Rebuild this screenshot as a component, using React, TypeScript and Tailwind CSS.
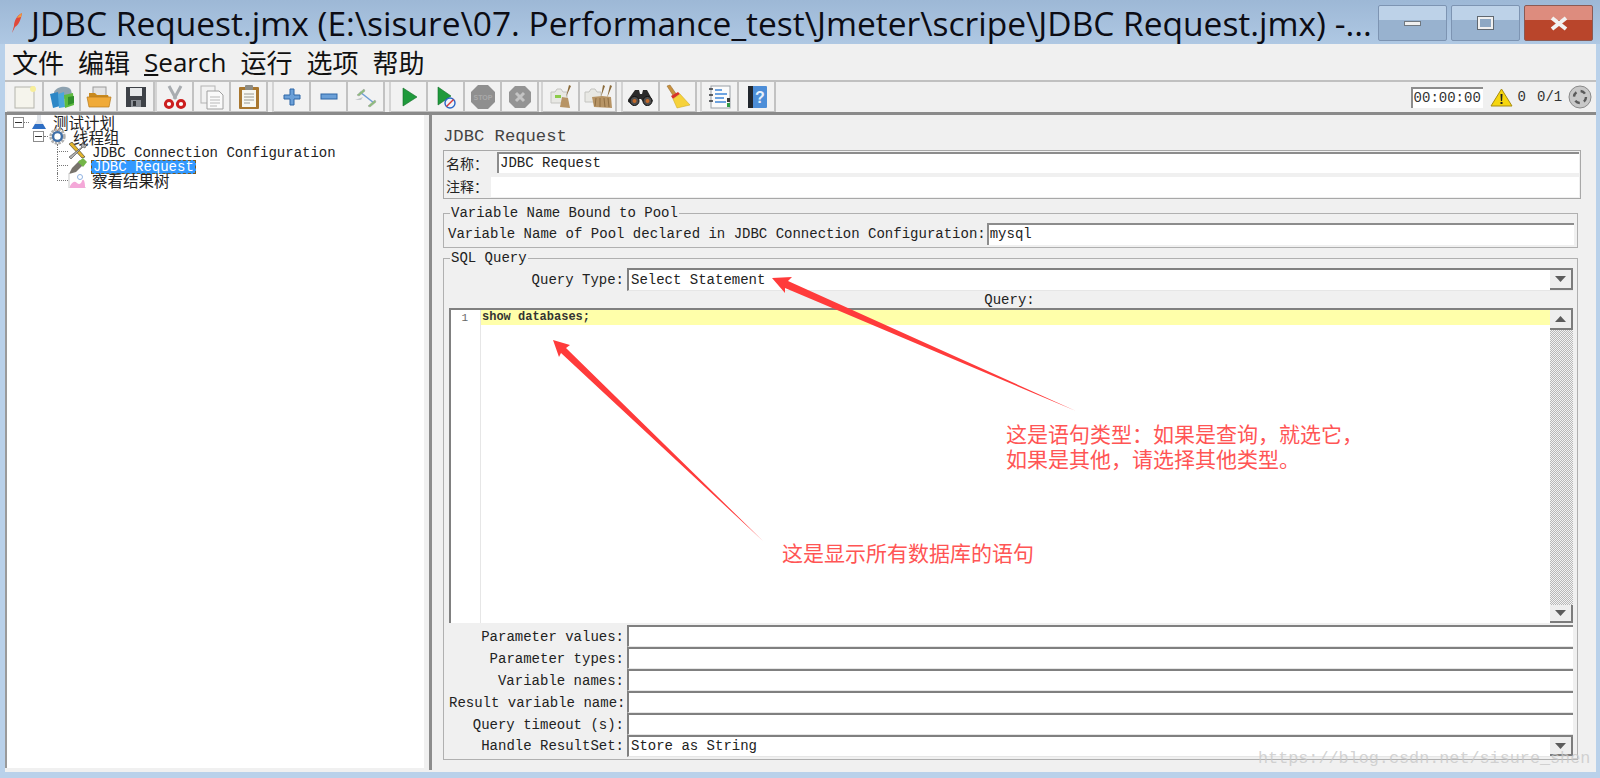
import React from 'react';

const mono = "font-['Liberation_Mono','Noto_Sans_CJK_SC',monospace]";
const cjk = "font-['Noto_Sans_CJK_SC',sans-serif]";

// --- toolbar icons, 24x24 ---
const NewIcon = () => (
    <svg width="26" height="26" viewBox="0 0 26 26">
        <rect x="3" y="3" width="19" height="21" fill="#f5f4ec" stroke="#b4b4ac" />
        <circle cx="21" cy="5" r="3" fill="#f7ee9a" />
    </svg>
);
const TemplatesIcon = () => (
    <svg width="28" height="26" viewBox="0 0 28 26">
        <path d="M6 8c3-6 14-7 17-2l2 8-19 2z" fill="#8ea2b0" />
        <path d="M2 10l8-2 2 14-7 2z" fill="#2c87c6" />
        <path d="M10 10l6-2 1 15-6 1z" fill="#4aa6dc" />
        <path d="M16 11l9-2 1 12-9 3z" fill="#5dbb3f" />
        <path d="M20 13l6-1v7l-6 2z" fill="#2f8f2c" />
    </svg>
);
const OpenIcon = () => (
    <svg width="26" height="26" viewBox="0 0 26 26">
        <rect x="7" y="3" width="13" height="10" fill="#e4e4e4" stroke="#9a9a9a" />
        <path d="M3 9h6l2 2h11l1 3H3z" fill="#c98a1e" />
        <path d="M1 13h24l-2 10H3z" fill="#f0aa38" stroke="#b57a1c" strokeWidth=".7" />
    </svg>
);
const SaveIcon = () => (
    <svg width="24" height="24" viewBox="0 0 24 24">
        <path d="M2 2h20v20H2z" fill="#3e4248" />
        <rect x="6" y="3" width="12" height="8" fill="#e6e8ea" />
        <rect x="7" y="15" width="10" height="7" fill="#8a8e94" />
        <rect x="9" y="16" width="3" height="5" fill="#33363a" />
    </svg>
);
const CutIcon = () => (
    <svg width="26" height="26" viewBox="0 0 26 26">
        <path d="M7 2l7 13M19 2l-7 13" stroke="#a8acb0" strokeWidth="3" fill="none" />
        <circle cx="7" cy="20" r="3.6" fill="#fff" stroke="#cc1f1f" strokeWidth="3" />
        <circle cx="19" cy="20" r="3.6" fill="#fff" stroke="#cc1f1f" strokeWidth="3" />
    </svg>
);
const CopyIcon = () => (
    <svg width="26" height="26" viewBox="0 0 26 26">
        <rect x="2" y="2" width="14" height="17" fill="#f2f2f2" stroke="#b4b4b4" />
        <path d="M8 7h12l4 4v14H8z" fill="#fafafa" stroke="#a0a0a0" />
        <path d="M11 13h10M11 16h10M11 19h10M11 22h7" stroke="#b8b8b8" />
    </svg>
);
const PasteIcon = () => (
    <svg width="26" height="26" viewBox="0 0 26 26">
        <rect x="3" y="3" width="20" height="22" rx="1" fill="#a9772f" />
        <rect x="6" y="6" width="14" height="17" fill="#f7f7f2" />
        <rect x="9" y="1" width="8" height="5" rx="1" fill="#8c8c86" />
        <path d="M8 10h10M8 13h10M8 16h10M8 19h6" stroke="#9a9a92" />
    </svg>
);
const PlusIcon = () => (
    <svg width="20" height="20" viewBox="0 0 20 20">
        <path d="M8 2h4v6h6v4h-6v6H8v-6H2V8h6z" fill="#6ba0d8" stroke="#2f66a6" />
    </svg>
);
const MinusIcon = () => (
    <svg width="20" height="20" viewBox="0 0 20 20">
        <rect x="2" y="7" width="16" height="5" fill="#6ba0d8" stroke="#2f66a6" />
    </svg>
);
const ToggleIcon = () => (
    <svg width="26" height="26" viewBox="0 0 26 26">
        <path d="M7 8l14 11" stroke="#6d9dd6" strokeWidth="1.5" />
        <path d="M4 11l7-6 1 2-6 5z" fill="#8cc07a" stroke="#999" strokeWidth=".5" />
        <path d="M15 22l7-6 1 2-6 5z" fill="#8cc07a" stroke="#999" strokeWidth=".5" />
        <path d="M2 16l8-3-2 3z" fill="#c4c8cc" />
    </svg>
);
const PlayIcon = () => (
    <svg width="24" height="24" viewBox="0 0 24 24">
        <path d="M6 3l14 9-14 9z" fill="#1f9a3c" stroke="#116d26" strokeWidth=".6" />
    </svg>
);
const PlayNoTimerIcon = () => (
    <svg width="24" height="26" viewBox="0 0 24 26">
        <path d="M4 3l13 9-13 9z" fill="#1f9a3c" stroke="#116d26" strokeWidth=".6" />
        <circle cx="16" cy="19" r="5" fill="#eef3fa" stroke="#2a66c8" strokeWidth="1.4" />
        <path d="M12.5 22.5l7-7" stroke="#d83a3a" strokeWidth="1.4" />
    </svg>
);
const StopIcon = () => (
    <svg width="26" height="26" viewBox="0 0 26 26">
        <path d="M8 1h10l7 7v10l-7 7H8l-7-7V8z" fill="#8f8f8f" />
        <text x="13" y="16" textAnchor="middle" fontSize="7" fontWeight="700" fontFamily="Liberation Sans" fill="#a9a9a9">STOP</text>
    </svg>
);
const ShutdownIcon = () => (
    <svg width="26" height="26" viewBox="0 0 26 26">
        <path d="M8 2h10l6 6v10l-6 6H8l-6-6V8z" fill="#949494" />
        <path d="M9 9l8 8M17 9l-8 8" stroke="#c4c4c4" strokeWidth="3" />
    </svg>
);
const ClearIcon = () => (
    <svg width="26" height="26" viewBox="0 0 26 26">
        <path d="M3 8h4l2-3h4l2 3h4v11H3z" fill="#e8e8e4" stroke="#c4c4c0" />
        <rect x="7" y="11" width="6" height="3" fill="#8ccc4a" />
        <path d="M21 1l2 1-5 11z" fill="#8a6a3a" />
        <path d="M14 13l6 1 2 10-10-1z" fill="#b79465" />
    </svg>
);
const ClearAllIcon = () => (
    <svg width="30" height="26" viewBox="0 0 30 26">
        <path d="M2 8h4l2-3h4l2 3h4v10H2z" fill="#e8e8e4" stroke="#c4c4c0" />
        <path d="M20 1l2 1-4 11zM27 1l2 1-5 12z" fill="#8a6a3a" />
        <path d="M9 13l10-1 9 1 1 11-18-1z" fill="#b79465" />
        <path d="M13 14l-1 8M17 14v9M21 14l1 9M25 14l1 9" stroke="#8f6e42" />
    </svg>
);
const BinocularsIcon = () => (
    <svg width="26" height="22" viewBox="0 0 26 22">
        <path d="M7 4h4l1 4h2l1-4h4l6 11-7 5-5-7h-2l-5 7-7-5z" fill="#2a2a2a" />
        <circle cx="6.5" cy="15" r="4.5" fill="#4e4e4e" stroke="#111" />
        <circle cx="19.5" cy="15" r="4.5" fill="#4e4e4e" stroke="#111" />
        <circle cx="6.5" cy="15" r="2" fill="#c46a2a" />
        <circle cx="19.5" cy="15" r="2" fill="#c46a2a" />
    </svg>
);
const BroomIcon = () => (
    <svg width="26" height="26" viewBox="0 0 26 26">
        <path d="M2 2l3-1 7 10-3 2z" fill="#c9913e" stroke="#8e6424" strokeWidth=".5" />
        <path d="M6 12l7-4 2 2-7 5z" fill="#d8322a" />
        <path d="M8 15l7-5 10 11-13 3z" fill="#f6d23b" stroke="#c9a21c" strokeWidth=".5" />
    </svg>
);
const FunctionIcon = () => (
    <svg width="26" height="26" viewBox="0 0 26 26">
        <rect x="4" y="2" width="19" height="22" fill="#fbfbfb" stroke="#9aa0a6" />
        <path d="M2 5h4M2 11h4M2 17h4" stroke="#33363a" strokeWidth="1.4" />
        <path d="M8 6h7M8 10h12M8 14h9M8 18h11" stroke="#3f86d8" strokeWidth="1.6" />
        <rect x="20" y="14" width="3" height="4" fill="#3a3a3a" />
        <rect x="20" y="19" width="3" height="4" fill="#2e9b46" />
    </svg>
);
const HelpIcon = () => (
    <svg width="24" height="26" viewBox="0 0 24 26">
        <rect x="3" y="2" width="19" height="22" rx="1" fill="#4d8ed8" />
        <rect x="3" y="2" width="5" height="22" fill="#22272e" />
        <text x="15" y="19" textAnchor="middle" fontSize="16" fontWeight="700" fontFamily="Liberation Sans" fill="#e8f1fb">?</text>
    </svg>
);

// --- tree icons ---
const FlaskIcon = () => (
    <svg width="16" height="16" viewBox="0 0 16 16">
        <path d="M6 1h4v5l5 9H1l5-9z" fill="#dfe3e8" />
        <path d="M4 10h8l3 5H1z" fill="#2e6ec4" />
    </svg>
);
const GearIcon = () => (
    <svg width="19" height="17" viewBox="0 0 19 17">
        <circle cx="9.5" cy="8.5" r="6.5" fill="none" stroke="#b0b0b0" strokeWidth="3.4" strokeDasharray="2.4 1" />
        <circle cx="9.5" cy="8.5" r="4.4" fill="none" stroke="#3f6fa8" strokeWidth="2.4" />
    </svg>
);
const WrenchIcon = () => (
    <svg width="20" height="18" viewBox="0 0 20 18">
        <path d="M1 2l13 14 3-1L4 0z" fill="#e3b52c" stroke="#333" strokeWidth=".6" />
        <path d="M3 17L15 5l2 1 2-4-3 1-1-3-2 4 1 1L1 15z" fill="#b0b0b0" stroke="#444" strokeWidth=".6" />
    </svg>
);
const PenIcon = () => (
    <svg width="20" height="18" viewBox="0 0 20 18">
        <path d="M1 17l3-6 8-8 4 4-8 8z" fill="#77736c" />
        <path d="M10 5l5-4 4 4-4 5z" fill="#74b648" />
    </svg>
);
const ChartIcon = () => (
    <svg width="18" height="15" viewBox="0 0 18 15">
        <path d="M1 0v15h17" fill="none" stroke="#c9c9c9" />
        <path d="M2 13c3-5 5-5 7-3s4 1 5-2 3 0 3 5v2H2z" fill="#f4a8d8" />
        <circle cx="12" cy="4" r="2.5" fill="none" stroke="#8fb2e2" />
    </svg>
);

const toolbarGroups = [
    { cls: "ml-[2px]", icons: [NewIcon, TemplatesIcon, OpenIcon, SaveIcon] },
    { cls: "border-l-2 border-[#d4d4d4]", icons: [CutIcon, CopyIcon, PasteIcon] },
    { cls: "ml-[4px] border-l-2 border-[#d4d4d4]", icons: [PlusIcon, MinusIcon, ToggleIcon] },
    { cls: "ml-[4px] border-l-2 border-[#d4d4d4]", icons: [PlayIcon, PlayNoTimerIcon, StopIcon, ShutdownIcon] },
    { cls: "ml-[2px] border-l-2 border-[#d4d4d4]", icons: [ClearIcon, ClearAllIcon] },
    { cls: "ml-[4px] border-l-2 border-[#d4d4d4]", icons: [BinocularsIcon, BroomIcon] },
    { cls: "ml-[3px] border-l-2 border-[#d4d4d4]", icons: [FunctionIcon, HelpIcon] },
];

const paramRows = [
    { label: "Parameter values:", value: "" },
    { label: "Parameter types:", value: "" },
    { label: "Variable names:", value: "" },
    { label: "Result variable name:", value: "" },
    { label: "Query timeout (s):", value: "" },
];

const Expander = () => (
    <span className="w-[11px] h-[11px] border border-[#8c8c8c] bg-white flex items-center justify-center shrink-0">
        <span className="w-[7px] h-px bg-[#333]" />
    </span>
);

const Connector = ({ last }: { last?: boolean }) => (
    <span className="w-[11px] self-stretch flex flex-col shrink-0">
        <span className="flex-1 border-l border-b border-dotted border-[#777]" />
        <span className={last ? "flex-1" : "flex-1 border-l border-dotted border-[#777]"} />
    </span>
);

const Combo = ({ text }: { text: string }) => (
    <div className="flex-1 h-full bg-white border-t-2 border-l-2 border-[#808080] border-b border-b-[#e6e6e6] flex items-center pl-[2px]">
        <span className="flex-1">{text}</span>
        <ArrowButton down />
    </div>
);

const ArrowButton = ({ down }: { down?: boolean }) => (
    <span className="w-[23px] h-full self-stretch bg-[#eeeeee] border-r-2 border-b-2 border-[#7c7c7c] flex items-center justify-center shrink-0">
        <svg width="11" height="6" viewBox="0 0 11 6">
            <path d={down ? "M0 0h11L5.5 6z" : "M0 6h11L5.5 0z"} fill="#5c5c5c" />
        </svg>
    </span>
);

const WinButton = ({ close, children }: { close?: boolean; children: React.ReactNode }) => (
    <div className={close
        ? "w-[69px] h-[36px] rounded-[2px] border border-[#8a5a54] flex items-center justify-center bg-[linear-gradient(#dd8c7e_0%,#dd8c7e_40%,#b9452b_41%,#b9452b_100%)]"
        : "w-[69px] h-[36px] rounded-[2px] border border-[#7d94b2] flex items-center justify-center bg-[linear-gradient(#bdd2e8_0%,#bdd2e8_40%,#98b2cf_41%,#98b2cf_100%)]"}>
        {children}
    </div>
);

export default function App() {
    return (
        <div className={`relative w-[1600px] h-[778px] overflow-hidden bg-[#b9d1ea] flex flex-col ${mono} text-[14px] text-[#222]`}>
            {/* title bar */}
            <div className="h-[44px] shrink-0 flex items-start bg-[linear-gradient(#9db8d6,#afc8e3)]">
                <svg className="ml-[10px] mt-[12px] shrink-0" width="14" height="22" viewBox="0 0 14 22">
                    <path d="M12 1C7 3 4 9 4 14l-2 7 3-6c4-2 6-8 7-14z" fill="#e0483a" />
                    <path d="M12 1c-2 1-4 3-5 5l4-1z" fill="#f0a040" />
                </svg>
                <div className="ml-[7px] shrink-0 font-['Open_Sans',sans-serif] text-[33.5px] leading-[38px] mt-[4px] text-[#0c0c14] whitespace-nowrap">
                    {"JDBC Request.jmx (E:\\sisure\\07. Performance_test\\Jmeter\\scripe\\JDBC Request.jmx) -..."}
                </div>
                <div className="ml-auto mr-[7px] mt-[5px] flex gap-[4px]">
                    <WinButton>
                        <span className="w-[17px] h-[5px] bg-[#f0f0f0] border border-[#707880]" />
                    </WinButton>
                    <WinButton>
                        <span className="w-[15px] h-[12px] bg-[#8ea8c4] border-2 border-[#f0f0f0] outline outline-[#606870]" />
                    </WinButton>
                    <WinButton close>
                        <svg width="20" height="15" viewBox="0 0 20 15">
                            <path d="M3 2l7 5.5L17 2M3 13l7-5.5 7 5.5" stroke="#f2f2f2" strokeWidth="4" fill="none" />
                        </svg>
                    </WinButton>
                </div>
            </div>

            <div className="ml-[5px] mr-[4px] h-[728px] shrink-0 bg-[#f0f0f0] flex flex-col">
                {/* menu bar */}
                <div className="h-[36px] shrink-0 flex items-center pl-[7px] gap-[14px] text-[26px] leading-[34px] text-[#111]">
                    <span className={cjk}>文件</span>
                    <span className={cjk}>编辑</span>
                    <span className="font-['Open_Sans',sans-serif] text-[26px]"><span className="underline">S</span>earch</span>
                    <span className={cjk}>运行</span>
                    <span className={cjk}>选项</span>
                    <span className={cjk}>帮助</span>
                </div>

                {/* toolbar */}
                <div className="h-[35px] shrink-0 flex items-center border-t-2 border-[#c0c0c0] border-b-[3px] border-b-[#8a8a8a]">
                    {toolbarGroups.map((group, i) => (
                        <div key={i} className={`flex ${group.cls}`}>
                            {group.icons.map((Icon, j) => (
                                <div key={j} className="w-[37px] h-[30px] bg-[#f2f2f2] border-r-2 border-b border-[#c2c2c2] flex items-center justify-center">
                                    <Icon />
                                </div>
                            ))}
                        </div>
                    ))}
                    <div className="ml-auto flex items-center pr-[4px]">
                        <div className="w-[72px] h-[21px] bg-white border-t-2 border-l-2 border-[#8c8c8c] text-[#333] flex items-center pl-[1px] leading-none">00:00:00</div>
                        <svg className="ml-[7px]" width="23" height="19" viewBox="0 0 23 19">
                            <path d="M11.5 1L22 18H1z" fill="#f6d60e" stroke="#a88c10" />
                            <path d="M10.5 6h2l-.4 7h-1.2zM10.5 14h2v2h-2z" fill="#222" />
                        </svg>
                        <span className="ml-[5px] text-[#333]">0</span>
                        <span className="ml-[11px] text-[#333] w-[26px]">0/1</span>
                        <svg className="ml-[5px]" width="24" height="24" viewBox="0 0 24 24">
                            <circle cx="12" cy="12" r="11" fill="#c8c8c8" stroke="#8a8a8a" />
                            <circle cx="12" cy="12" r="6" fill="none" stroke="#5a5a5a" strokeWidth="2.4" strokeDasharray="5 4.4" />
                        </svg>
                    </div>
                </div>

                <div className="flex flex-1 min-h-0">
                    {/* tree */}
                    <div className="w-[419px] mb-[4px] bg-white border-l-2 border-[#9a9a9a] pl-[6px] shrink-0 leading-[14px] overflow-hidden">
                        <div className="h-[14.5px] flex items-center">
                            <Expander />
                            <span className="w-[5px] border-t border-dotted border-[#777] mr-[2px]" />
                            <FlaskIcon />
                            <span className={`ml-[6px] text-[15.5px] ${cjk}`}>测试计划</span>
                        </div>
                        <div className="h-[14.5px] flex items-center pl-[20px]">
                            <Expander />
                            <span className="w-[4px] border-t border-dotted border-[#777]" />
                            <GearIcon />
                            <span className={`ml-[6px] text-[15.5px] ${cjk}`}>线程组</span>
                        </div>
                        <div className="h-[14.5px] flex items-center pl-[44px]">
                            <Connector />
                            <WrenchIcon />
                            <span className="ml-[4px] mt-[4px]">JDBC Connection Configuration</span>
                        </div>
                        <div className="h-[14.5px] flex items-center pl-[44px]">
                            <Connector />
                            <PenIcon />
                            <span className="ml-[3px] mt-[2px] h-[14.5px] px-px bg-[#3399ff] text-white border border-dashed border-[#7a5a20] leading-[12px]">JDBC Request</span>
                        </div>
                        <div className="h-[14.5px] flex items-center pl-[44px]">
                            <Connector last />
                            <ChartIcon />
                            <span className={`ml-[6px] text-[15.5px] ${cjk}`}>察看结果树</span>
                        </div>
                    </div>

                    {/* split divider */}
                    <div className="w-[8px] shrink-0 flex justify-end pb-[2px]">
                        <span className="w-[3px] h-full bg-[#8c8c8c]" />
                    </div>

                    {/* request panel */}
                    <div className="flex-1 min-w-0 pl-[11px] pr-[15px] pt-[9px]">
                        <div className="h-[26px] text-[17.2px] leading-[26px] text-[#444]">JDBC Request</div>
                        <div className="h-[49px] border border-[#a8a8a8] flex flex-col pl-[1px] pr-[1px]">
                            <div className="h-[25px] flex pt-px">
                                <span className={`w-[52px] pl-px leading-[22px] ${cjk}`}>{"名称\uFF1A"}</span>
                                <div className="flex-1 h-[21px] bg-white border-t-2 border-l-2 border-[#8c8c8c] pl-px leading-[18px]">JDBC Request</div>
                            </div>
                            <div className="h-[22px] flex">
                                <span className={`w-[46px] pl-px leading-[20px] ${cjk}`}>{"注释\uFF1A"}</span>
                                <div className="flex-1 h-[20px] mt-px bg-white" />
                            </div>
                        </div>

                        <fieldset className="mt-[6px] mr-[3px] border border-[#b0b0b0]">
                            <legend className="ml-[6px] px-px h-[16px] leading-[16px]">Variable Name Bound to Pool</legend>
                            <div className="flex h-[26px] py-[2px] pl-[4px] pr-[3px]">
                                <span className="whitespace-nowrap leading-[22px]">Variable Name of Pool declared in JDBC Connection Configuration:</span>
                                <div className="flex-1 ml-px h-[22px] bg-white border-t-2 border-l-2 border-[#8c8c8c] pl-px leading-[18px]">mysql</div>
                            </div>
                        </fieldset>

                        <fieldset className="mt-[2px] mr-[3px] border border-[#b0b0b0] pl-[5px] pr-[4px] pb-[2px]">
                            <legend className="ml-px px-px h-[16px] leading-[16px]">SQL Query</legend>
                            <div className="flex h-[23px] mt-[2px]">
                                <span className="w-[178px] pr-[3px] pt-[2px] text-right leading-[21px]">Query Type:</span>
                                <Combo text="Select Statement" />
                            </div>
                            <div className="h-[17px] text-center leading-[19px] pr-[3px]">Query:</div>

                            {/* sql editor */}
                            <div className="h-[315px] bg-white border-t-2 border-l-2 border-[#808080] flex">
                                <div className="w-[30px] shrink-0 border-r border-[#e6e6e6] text-[11px] text-[#666] text-right pr-[12px] pt-[1px] leading-[14px]">1</div>
                                <div className="flex-1 min-w-0">
                                    <div className="h-[15px] bg-[#ffffaa] pl-px text-[12px] leading-[14px] font-bold text-[#333]">show databases;</div>
                                </div>
                                <div className="w-[23px] shrink-0 flex flex-col">
                                    <div className="h-[20px]"><ArrowButton /></div>
                                    <div className="flex-1 bg-[repeating-conic-gradient(#b8b8b8_0_25%,#f2f2f2_0_50%)] bg-[length:2px_2px]" />
                                    <div className="h-[18px]"><ArrowButton down /></div>
                                </div>
                            </div>

                            <div className="mt-[2px]">
                                {paramRows.map((row) => (
                                    <div key={row.label} className="flex h-[22px]">
                                        <span className="w-[178px] pr-[3px] pt-[2px] text-right leading-[20px] whitespace-nowrap">{row.label}</span>
                                        <div className="flex-1 bg-white border-t-2 border-l-2 border-[#808080] border-b border-b-[#e6e6e6]" />
                                    </div>
                                ))}
                                <div className="flex h-[22px]">
                                    <span className="w-[178px] pr-[3px] pt-px text-right leading-[21px]">Handle ResultSet:</span>
                                    <Combo text="Store as String" />
                                </div>
                            </div>
                        </fieldset>
                    </div>
                </div>
            </div>

            {/* annotations drawn over the window */}
            <svg className="absolute left-0 top-0 pointer-events-none" width="1600" height="778" viewBox="0 0 1600 778">
                <path d="M772 278L792 277L788 281L1076 411L785 288L785 293Z" fill="#ff3b3b" />
                <path d="M553 340L570 345L566 348L763 541L561 353L559 357Z" fill="#ff3b3b" />
            </svg>
            <div className={`absolute left-[1006px] top-[421px] text-[21px] leading-[25px] text-[#ff5555] whitespace-nowrap ${cjk}`}>
                {"这是语句类型\uFF1A如果是查询\uFF0C就选它\uFF0C"}<br />{"如果是其他\uFF0C请选择其他类型。"}
            </div>
            <div className={`absolute left-[782px] top-[540px] text-[21px] leading-[25px] text-[#ff5555] ${cjk}`}>这是显示所有数据库的语句</div>
            <div className="absolute left-[1258px] top-[749px] text-[16.8px] leading-[20px] text-[#c8c8c8]/80 whitespace-nowrap">https://blog.csdn.net/sisure_shen</div>
        </div>
    );
}
